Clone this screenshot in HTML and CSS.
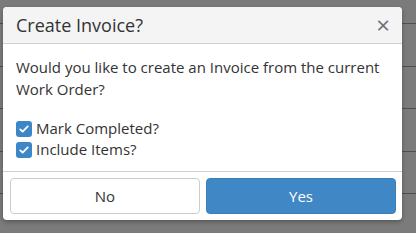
FILE: index.html
```html
<!DOCTYPE html>
<html lang="en">
<head>
    <meta charset="UTF-8">
    <title>Create Invoice?</title>
    <link rel="stylesheet" href="styles.css">
</head>
<body>

<div class="page">
    <div class="page-row"></div>
    <div class="page-row"></div>
    <div class="page-row"></div>
    <div class="page-row"></div>
    <div class="page-row"></div>
</div>

<div class="modal">
    <div class="modal-header">
        <h4 class="modal-title">Create Invoice?</h4>
        <span class="close">&times;</span>
    </div>
    <div class="modal-body">
        <p>Would you like to create an Invoice from the current Work Order?</p>
        <label class="check"><span class="box"><svg viewBox="0 0 16 16" width="12" height="12"><path d="M3 8.5l3.2 3L13 4.5" fill="none" stroke="#fff" stroke-width="2.4" stroke-linecap="round" stroke-linejoin="round"/></svg></span>Mark Completed?</label>
        <label class="check"><span class="box"><svg viewBox="0 0 16 16" width="12" height="12"><path d="M3 8.5l3.2 3L13 4.5" fill="none" stroke="#fff" stroke-width="2.4" stroke-linecap="round" stroke-linejoin="round"/></svg></span>Include Items?</label>
    </div>
    <div class="modal-footer">
        <button class="btn btn-default">No</button>
        <button class="btn btn-primary">Yes</button>
    </div>
</div>

</body>
</html>
```

FILE: styles.css
```css
body {
    margin: 0;
    padding: 0;
    width: 416px;
    height: 233px;
    overflow: hidden;
    background-color: #7b7b7b;
    font-family: "Open Sans", "Liberation Sans", sans-serif;
    color: #333;
}
.page {
    padding-top: 23px;
}
.page-row {
    height: 41.5px;
    border-top: 1px solid #4e4e4e;
}
.modal {
    position: absolute;
    left: 3px;
    top: 7px;
    width: 399px;
    background-color: #fff;
    border-radius: 4px;
    box-shadow: 0 2px 4px rgba(0,0,0,0.3);
    overflow: hidden;
}
.modal-header {
    display: flex;
    align-items: center;
    justify-content: space-between;
    height: 36px;
    padding: 0 12px 0 13px;
    background-color: #f4f4f4;
    border-bottom: 1px solid #cfcfcf;
}
.modal-title {
    margin: 0;
    font-size: 18px;
    font-weight: normal;
    color: #333;
}
.close {
    font-size: 24px;
    color: #707070;
    line-height: 1;
}
.modal-body {
    padding: 12px 13px 11px 13px;
    font-size: 15px;
}
.modal-body p {
    margin: 0 0 18px 0;
    line-height: 22px;
}
.check {
    display: flex;
    align-items: center;
    gap: 4px;
    height: 21px;
    line-height: 21px;
}
.box {
    display: flex;
    align-items: center;
    justify-content: center;
    width: 16px;
    height: 16px;
    border-radius: 3px;
    background-color: #3d86c8;
}
.modal-footer {
    display: grid;
    grid-template-columns: 1fr 1fr;
    gap: 6px;
    padding: 6px 6px 6px 7px;
    border-top: 1px solid #cfcfcf;
}
.btn {
    height: 36px;
    border-radius: 4px;
    font-family: "Open Sans", "Liberation Sans", sans-serif;
    font-size: 15px;
}
.btn-default {
    background-color: #fff;
    border: 1px solid #ccc;
    color: #333;
}
.btn-primary {
    background-color: #3f88c5;
    border: 1px solid #3a80bb;
    color: #fff;
}
```
